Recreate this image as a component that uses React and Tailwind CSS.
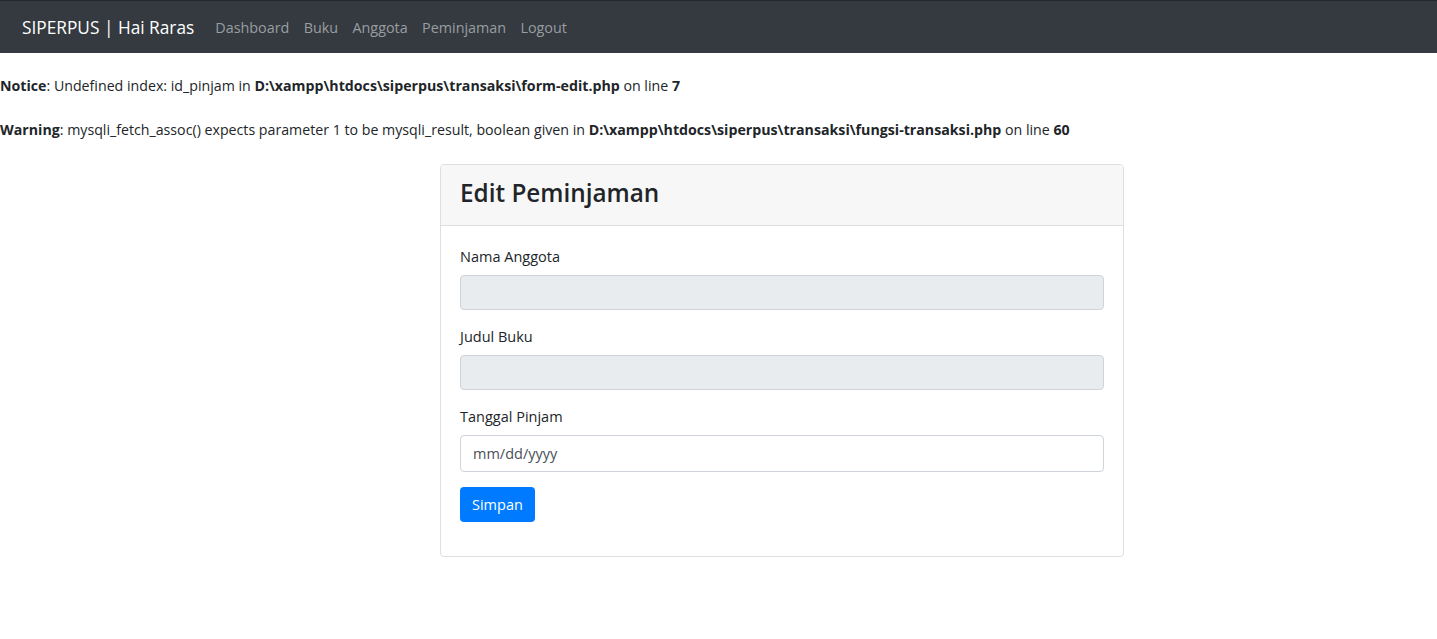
import React from "react";

const font = { fontFamily: '"Open Sans", "Noto Sans", Arial, sans-serif' };

const Navbar = () => (
  <nav className="h-[53px] bg-[#343a40] border-t border-[#23272b] flex items-center px-[22px] pt-[2px]">
    <span className="text-white text-[17.3px] mr-[21px]">SIPERPUS | Hai Raras</span>
    <div className="flex gap-[14.4px] text-[14.35px] text-[#9a9da0]">
      <a>Dashboard</a>
      <a>Buku</a>
      <a>Anggota</a>
      <a>Peminjaman</a>
      <a>Logout</a>
    </div>
  </nav>
);

const Field = ({ label, last, children }) => (
  <div className={last ? "mb-[15px]" : "mb-[16px]"}>
    <label className="block text-[14.5px] text-[#212529] leading-[22px] mb-[7px]">{label}</label>
    {children}
  </div>
);

export default function App() {
  return (
    <div className="min-h-screen bg-white text-[#212529]" style={font}>
      <Navbar />

      {/* PHP notices */}
      <div className="pt-[22px] text-[14.2px] leading-[22px]">
        <p>
          <b>Notice</b>: Undefined index: id_pinjam in <b>D:\xampp\htdocs\siperpus\transaksi\form-edit.php</b> on line <b>7</b>
        </p>
        <p className="mt-[22px]">
          <b>Warning</b>: mysqli_fetch_assoc() expects parameter 1 to be mysqli_result, boolean given in{" "}
          <b>D:\xampp\htdocs\siperpus\transaksi\fungsi-transaksi.php</b> on line <b>60</b>
        </p>
      </div>

      <div className="ml-[440px] mt-[23px] w-[684px] border border-[#dfdfdf] rounded-[4px] overflow-hidden">
        <div className="h-[61px] bg-[#f7f7f7] border-b border-[#dfdfdf] flex items-center px-[19px] pb-[4px]">
          <h2 className="text-[24.3px] font-semibold text-[#212529]">Edit Peminjaman</h2>
        </div>
        <div className="px-[19px] pt-[20px] pb-[34px]">
          <Field label="Nama Anggota">
            <div className="h-[35px] bg-[#e9ecef] border border-[#ced4da] rounded-[4px]" />
          </Field>
          <Field label="Judul Buku">
            <div className="h-[35px] bg-[#e9ecef] border border-[#ced4da] rounded-[4px]" />
          </Field>
          <Field label="Tanggal Pinjam" last>
            <div className="h-[37px] bg-white border border-[#ced4da] rounded-[4px] flex items-center px-[12px] text-[14.5px] text-[#495057]">
              mm/dd/yyyy
            </div>
          </Field>
          <button className="h-[35px] px-[12px] bg-[#007bff] text-white text-[14.5px] rounded-[4px]">
            Simpan
          </button>
        </div>
      </div>
    </div>
  );
}
